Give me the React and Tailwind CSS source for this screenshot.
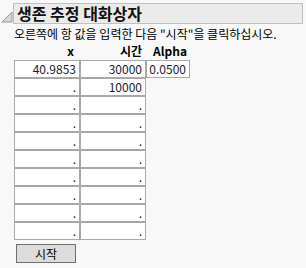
import React from 'react';

const rows = [
	['40.9853', '30000', '0.0500'],
	['.', '10000'],
	['.', '.'],
	['.', '.'],
	['.', '.'],
	['.', '.'],
	['.', '.'],
	['.', '.'],
	['.', '.'],
	['.', '.'],
];

function Cell({ value, width }) {
	return (
		<div className={`${width} h-[18px] bg-white border border-[#a8a8a8] text-right pr-[3px] leading-[16px] text-[12px] text-[#1a1a2e]`}>
			{value}
		</div>
	);
}

export default function App() {
	return (
		<div className="w-[306px] h-[268px] bg-[#f8f8f8] font-['Noto_Sans_CJK_KR','Noto_Sans',sans-serif] text-black overflow-hidden">
			{/* title bar */}
			<div className="flex items-end pt-[3px] pl-[1px]">
				<svg width="12" height="12" viewBox="0 0 12 12" className="mb-[1px]">
					<polygon points="1,11 11,1 11,11" fill="#d8d8d8" stroke="#9a9a9a" strokeWidth="1" />
				</svg>
				<div className="w-[290px] h-[21px] bg-[#ebebeb] border border-[#c0c0c0] pl-[3px] text-[16px] font-bold leading-[19px] text-[#111]">
					생존 추정 대화상자
				</div>
			</div>

			<div className="pl-[14px] mt-[2px] text-[12px] leading-[16px]">
				오른쪽에 항 값을 입력한 다음 "시작"을 클릭하십시오.
			</div>

			{/* column headers */}
			<div className="flex pl-[14px] text-[12px] font-bold leading-[18px]">
				<div className="w-[66px] text-right pr-[6px]">x</div>
				<div className="w-[66px] text-right pr-[4px]">시간</div>
				<div className="w-[44px] text-right pr-[3px]">Alpha</div>
			</div>

			<div className="pl-[14px] flex flex-col">
				{rows.map((r, i) => (
					<div key={i} className="flex">
						<Cell value={r[0]} width="w-[66px]" />
						<Cell value={r[1]} width="w-[66px]" />
						{r[2] && <Cell value={r[2]} width="w-[44px]" />}
					</div>
				))}
			</div>

			<div className="pl-[16px] mt-[4px] flex">
				<button className="block w-[60px] h-[19px] bg-[#dcdcdc] border border-[#707070] text-[12px] leading-[16px] text-black">
					시작
				</button>
			</div>
		</div>
	);
}
